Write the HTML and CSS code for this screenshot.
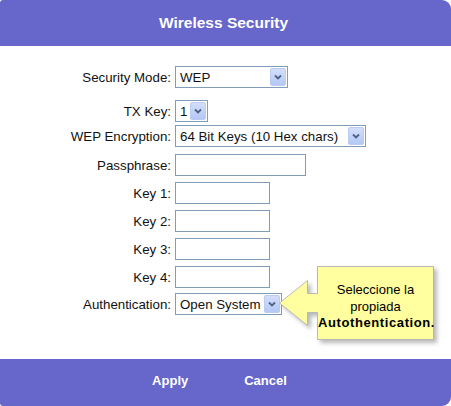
FILE: index.html
```html
<!DOCTYPE html>
<html>
<head>
<meta charset="utf-8">
<link rel="stylesheet" href="styles.css">
</head>
<body>
<div class="dialog">
  <div class="header">Wireless Security</div>
  <div class="content">
    <div class="row row-mode">
      <span class="label">Security Mode:</span>
      <span class="select w-mode"><span class="val">WEP</span><span class="btn"><svg width="8" height="6" viewBox="0 0 8 6"><path d="M1 1.5 L4 4.5 L7 1.5" fill="none" stroke="#4d6185" stroke-width="1.8"/></svg></span></span>
    </div>
    <div class="row row-tx">
      <span class="label">TX Key:</span>
      <span class="select w-tx"><span class="val">1</span><span class="btn"><svg width="8" height="6" viewBox="0 0 8 6"><path d="M1 1.5 L4 4.5 L7 1.5" fill="none" stroke="#4d6185" stroke-width="1.8"/></svg></span></span>
    </div>
    <div class="row row-wep">
      <span class="label">WEP Encryption:</span>
      <span class="select w-wep"><span class="val">64 Bit Keys (10 Hex chars)</span><span class="btn"><svg width="8" height="6" viewBox="0 0 8 6"><path d="M1 1.5 L4 4.5 L7 1.5" fill="none" stroke="#4d6185" stroke-width="1.8"/></svg></span></span>
    </div>
    <div class="row row-pass">
      <span class="label">Passphrase:</span>
      <input class="field w-pass" type="text">
    </div>
    <div class="row row-key">
      <span class="label">Key 1:</span>
      <input class="field w-key" type="text">
    </div>
    <div class="row row-key">
      <span class="label">Key 2:</span>
      <input class="field w-key" type="text">
    </div>
    <div class="row row-key">
      <span class="label">Key 3:</span>
      <input class="field w-key" type="text">
    </div>
    <div class="row row-key">
      <span class="label">Key 4:</span>
      <input class="field w-key" type="text">
    </div>
    <div class="row row-auth">
      <span class="label">Authentication:</span>
      <span class="select w-auth"><span class="val">Open System</span><span class="btn"><svg width="8" height="6" viewBox="0 0 8 6"><path d="M1 1.5 L4 4.5 L7 1.5" fill="none" stroke="#4d6185" stroke-width="1.8"/></svg></span></span>
    </div>

    <div class="tip">
      <svg class="tip-shape" width="160" height="80" viewBox="0 0 160 80">
        <path d="M39.5 1.5 H155.5 V74.5 H39.5 V47.5 H29.5 V60.5 L1.5 38 L29.5 15.5 V28.5 H39.5 Z" fill="#ffffa0" stroke="#b8b8b8" stroke-width="1"/>
      </svg>
      <div class="tip-text">Seleccione la<br>propiada<br><b>Autothentication.</b></div>
    </div>
  </div>
  <div class="footer">
    <span class="action">Apply</span>
    <span class="action">Cancel</span>
  </div>
</div>
</body>
</html>
```
FILE: styles.css
```css
html, body {
  margin: 0;
  padding: 0;
  background: #ffffff;
}
body {
  font-family: "Liberation Sans", Arial, sans-serif;
  font-size: 13.3px;
  color: #111;
}
.dialog {
  width: 451px;
  height: 406px;
  display: flex;
  flex-direction: column;
}
.header {
  height: 46px;
  flex: none;
  background: #6766ca;
  color: #fff;
  font-weight: bold;
  font-size: 15.5px;
  display: flex;
  align-items: center;
  justify-content: center;
  border-radius: 3px 9px 0 0;
  padding-right: 4px;
  box-sizing: border-box;
}
.content {
  flex: 1;
  position: relative;
  display: flex;
  flex-direction: column;
  padding-top: 20px;
}
.row {
  display: flex;
  align-items: center;
  height: 22px;
}
.row-tx { margin-top: 12px; }
.row-wep { margin-top: 3px; }
.row-pass { margin-top: 7px; }
.row-key { margin-top: 6px; }
.row-auth { margin-top: 5px; }
.label {
  width: 171px;
  text-align: right;
  margin-right: 4px;
  flex: none;
}
.select {
  display: flex;
  align-items: center;
  height: 22px;
  box-sizing: border-box;
  border: 1px solid #7f9db9;
  background: #fff;
  padding: 1px;
}
.select .val {
  flex: 1;
  padding-left: 3px;
  white-space: nowrap;
  overflow: hidden;
}
.select .btn {
  width: 16px;
  height: 18px;
  flex: none;
  box-sizing: border-box;
  border: 1px solid #bccbf2;
  border-radius: 2px;
  background: linear-gradient(#d3defa, #b4c8f6);
  display: flex;
  align-items: center;
  justify-content: center;
}
.w-mode { width: 113px; }
.w-tx { width: 33px; }
.w-wep { width: 191px; }
.w-auth { width: 107px; }
.field {
  height: 22px;
  box-sizing: border-box;
  border: 1px solid #7f9db9;
  margin: 0;
  padding: 0 3px;
  font: inherit;
  background: #fff;
}
.w-pass { width: 131px; }
.w-key { width: 95px; }
.tip {
  position: absolute;
  left: 278px;
  top: 219px;
  width: 160px;
  height: 80px;
}
.tip-shape {
  position: absolute;
  left: 0;
  top: 0;
  filter: drop-shadow(3px 3px 2px rgba(0, 0, 0, 0.28));
}
.tip-text {
  position: absolute;
  left: 39px;
  top: 17px;
  width: 117px;
  text-align: center;
  line-height: 16.5px;
  font-size: 13px;
  color: #000;
}
.tip-text b {
  letter-spacing: 0.6px;
  margin-left: 1px;
}
.footer {
  height: 47px;
  flex: none;
  background: #6766ca;
  color: #fff;
  font-weight: bold;
  font-size: 13px;
  display: flex;
  align-items: center;
  justify-content: center;
  gap: 56px;
  padding: 0 12px 5px 0;
  box-sizing: border-box;
  border-radius: 0 0 9px 3px;
}
```
